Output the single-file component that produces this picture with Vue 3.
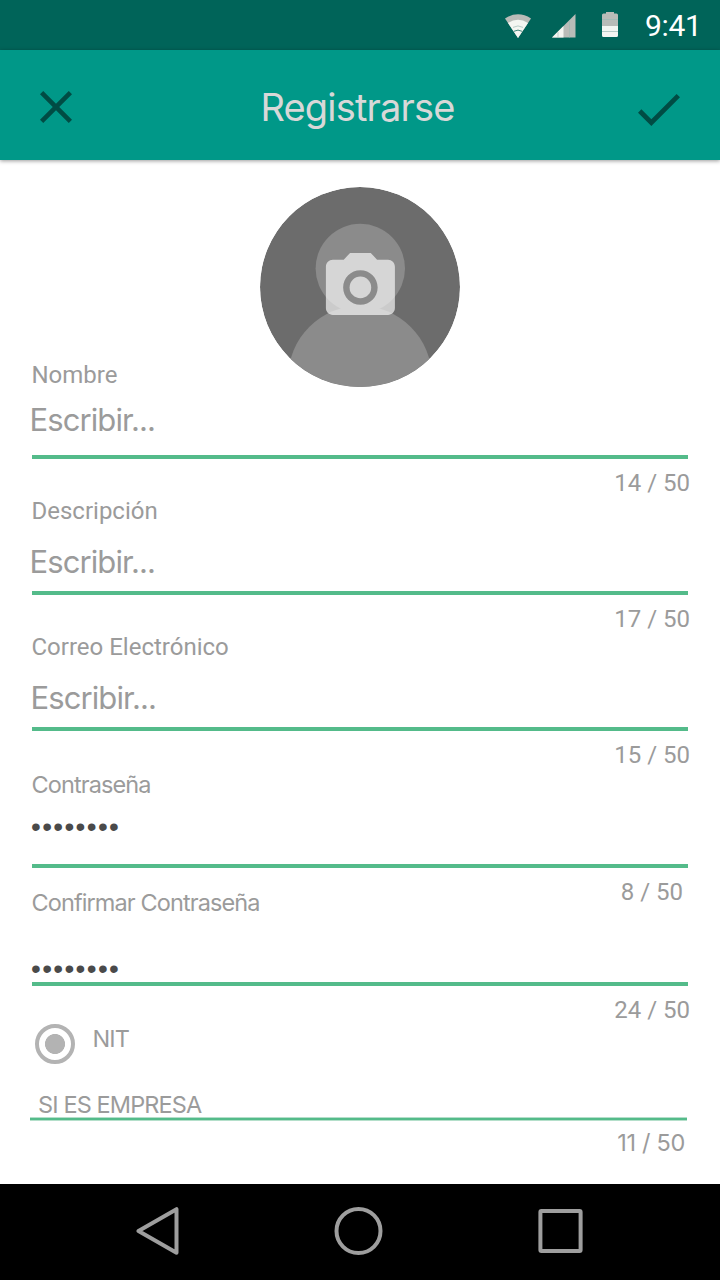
<script setup>
const fields = [
  { id: 'name', label: 'Nombre', value: 'Escribir...', count: '14 / 50' },
  { id: 'about', label: 'Descripción', value: 'Escribir...', count: '17 / 50' },
  { id: 'email', label: 'Correo Electrónico', value: 'Escribir...', count: '15 / 50' },
  { id: 'pass', label: 'Contraseña', value: '••••••••', count: '8 / 50', secret: true },
  { id: 'confirm', label: 'Confirmar Contraseña', value: '••••••••', count: '24 / 50', secret: true },
]
</script>

<template>
  <div class="screen">
    <div class="status">
      <svg class="wifi" width="26" height="24" viewBox="0 0 26 24">
        <path d="M0 4.4Q13-4 26 4.4L13 24Z" fill="#b9bcb8" />
        <path d="M3 9Q13 2.6 23 9L13 24Z" fill="#f4f6f2" />
        <path d="M8 13.4Q13 10.4 18 13.4" fill="none" stroke="#9cbab4" stroke-width=".7" />
        <path d="M8.6 17.4Q13 14.8 17.4 17.4" fill="none" stroke="#3f8479" stroke-width="1" />
      </svg>
      <svg class="signal" width="24" height="24" viewBox="0 0 24 24">
        <path d="M0 23.5L23.5 0V23.5Z" fill="#b9bcb8" />
        <path d="M0 23.5L11.5 12V23.5Z" fill="#f4f6f2" />
        <path d="M6 18v5.5M17.5 6v17.5" stroke="#9cbab4" stroke-width=".6" />
      </svg>
      <svg class="battery" width="16" height="25" viewBox="0 0 16 25">
        <path d="M4 0h8v1.5h2.5A1.5 1.5 0 0 1 16 3v11H0V3a1.5 1.5 0 0 1 1.5-1.5H4Z" fill="#b9bcb8" />
        <path d="M0 14h16v9.5a1.5 1.5 0 0 1-1.5 1.5h-13A1.5 1.5 0 0 1 0 23.5Z" fill="#f4f6f2" />
        <path d="M0 7.5h16M0 19.5h16" stroke="#9cbab4" stroke-width=".7" />
      </svg>
      <span class="time">9:41</span>
    </div>

    <header class="bar">
      <svg width="32" height="32" viewBox="5 5 14 14">
        <path d="M19 6.41L17.59 5 12 10.59 6.41 5 5 6.41 10.59 12 5 17.59 6.41 19 12 13.41 17.59 19 19 17.59 13.41 12z" />
      </svg>
      <h1>Registrarse</h1>
      <svg class="check" width="42" height="32" viewBox="3.41 5.59 17.59 13.41">
        <path d="M9 16.17L4.83 12l-1.42 1.41L9 19 21 7l-1.41-1.41z" />
      </svg>
    </header>

    <main class="form">
      <svg class="avatar" width="200" height="200" viewBox="0 0 200 200">
        <clipPath id="disc"><circle cx="100" cy="100" r="100" /></clipPath>
        <g clip-path="url(#disc)">
          <circle cx="100" cy="100" r="100" fill="#6c6c6c" />
          <circle cx="100.3" cy="81.5" r="44.7" fill="#8b8b8b" />
          <circle cx="100" cy="190.7" r="71.8" fill="#8b8b8b" />
        </g>
        <path
          transform="translate(59 59) scale(3.45)"
          fill="#fff"
          fill-opacity=".65"
          fill-rule="evenodd"
          d="M9 2L7.17 4H4c-1.1 0-2 .9-2 2v12c0 1.1.9 2 2 2h16c1.1 0 2-.9 2-2V6c0-1.1-.9-2-2-2h-3.17L15 2H9zm3 15c-2.76 0-5-2.24-5-5s2.24-5 5-5 5 2.24 5 5-2.24 5-5 5z"
        />
        <circle cx="100.4" cy="100.4" r="10.8" fill="#fff" fill-opacity=".65" />
      </svg>

      <section v-for="f in fields" :key="f.id" class="field" :class="[f.id, { secret: f.secret }]">
        <div class="label">{{ f.label }}</div>
        <div class="value">{{ f.value }}</div>
        <div class="line"></div>
        <div class="count">{{ f.count }}</div>
      </section>

      <section class="company">
        <div class="option">
          <span class="radio"></span>
          <span class="nit">NIT</span>
        </div>
        <div class="hint">SI ES EMPRESA</div>
        <div class="line"></div>
        <div class="count">11 / 50</div>
      </section>
    </main>

    <nav class="nav">
      <svg width="44" height="50" viewBox="0 0 44 50">
        <path d="M2.5 25L40.5 3.2V46.8Z" />
      </svg>
      <svg width="50" height="50" viewBox="0 0 50 50">
        <circle cx="24.5" cy="25" r="22" />
      </svg>
      <svg width="46" height="50" viewBox="0 0 46 50">
        <rect x="2.4" y="5" width="40.2" height="40" rx="1" />
      </svg>
    </nav>
  </div>
</template>

<style>
body {
  margin: 0;
  background: #fff;
}
</style>

<style scoped>
.screen {
  width: 720px;
  height: 1280px;
  display: flex;
  flex-direction: column;
  overflow: hidden;
  background: #fff;
  color: #9b9b9b;
  font: 400 24px/28px Roboto, sans-serif;
  white-space: nowrap;
}
.status {
  flex: none;
  height: 50px;
  box-sizing: border-box;
  padding: 12px 18px 0 504.5px;
  display: flex;
  align-items: flex-start;
  background: #006459;
}
.wifi {
  margin-top: 2px;
}
.signal {
  margin: 1.5px 0 0 21.5px;
}
.status svg {
  flex: none;
}
.battery {
  margin-left: 26px;
}
.time {
  margin: -4px 0 0 27px;
  color: #fff;
  font-size: 30px;
  line-height: 36px;
  letter-spacing: -0.3px;
}
.bar {
  flex: none;
  height: 110px;
  box-sizing: border-box;
  padding: 4px 40px 0;
  display: flex;
  align-items: center;
  justify-content: space-between;
  background: #009888;
  box-shadow: 0 1px 4px rgba(0, 0, 0, 0.4);
}
.bar path {
  fill: #004c44;
}
.check {
  margin-top: 6px;
}
h1 {
  margin: 0 0 0 5px;
  color: #d8d8d8;
  font: 400 38px/48px Inter, sans-serif;
  letter-spacing: -0.82px;
}
.form {
  flex: none;
  height: 1024px;
  display: flex;
  flex-direction: column;
}
.avatar {
  flex: none;
  margin: 27px auto -26px;
}
.field,
.company {
  display: flex;
  flex-direction: column;
  padding: 0 32px;
}
.label {
  margin-left: -0.5px;
}
.value {
  margin: 13px 0 17px -2.5px;
  font: 400 31px/36px Inter, sans-serif;
  letter-spacing: -0.9px;
}
.line {
  height: 4px;
  background: #54bb8a;
}
.count {
  align-self: flex-end;
  margin: 10px -2px 0 0;
}
.about .value,
.email .value {
  margin-top: 19px;
  margin-bottom: 11px;
}
.email .value {
  margin-left: -1.5px;
}
.secret .label {
  font-family: Inter, sans-serif;
  font-size: 23.5px;
  letter-spacing: -0.9px;
}
.secret .value {
  height: 28px;
  margin: 14px 0 23px -1px;
  color: #4a4a4a;
  font: 28px/28px "Liberation Sans", sans-serif;
  letter-spacing: 1.35px;
}
.pass {
  padding-top: 2px;
}
.pass .count {
  margin-right: 5px;
}
.confirm {
  margin-top: -17px;
}
.confirm .value {
  margin: 38px 0 27px -1px;
  height: 0;
}
.company {
  padding: 0 33px 0 30px;
  font-family: Inter, sans-serif;
  font-size: 23.5px;
  letter-spacing: -0.87px;
}
.option {
  display: flex;
  height: 40px;
  padding-left: 5px;
}
.radio {
  width: 40px;
  height: 40px;
  box-sizing: border-box;
  border: 4px solid #b3b3b3;
  border-radius: 50%;
  background: radial-gradient(circle, #b3b3b3 9.7px, #fff 10.3px);
}
.nit {
  margin: 1px 0 0 17.5px;
}
.hint {
  margin: 27px 0 0 8px;
}
.company .line {
  height: 2px;
  margin-top: -2px;
  border: solid #b4dfca;
  border-width: 1px 0;
}
.company .count {
  margin: 8px 2px 0 0;
  letter-spacing: -0.3px;
}
.nav {
  flex: none;
  height: 96px;
  box-sizing: border-box;
  padding: 22px 136px 24px 136px;
  display: flex;
  justify-content: space-between;
  background: #000;
}
.nav path,
.nav circle,
.nav rect {
  fill: none;
  stroke: #9e9e9e;
  stroke-width: 4;
  stroke-linejoin: round;
}
</style>
